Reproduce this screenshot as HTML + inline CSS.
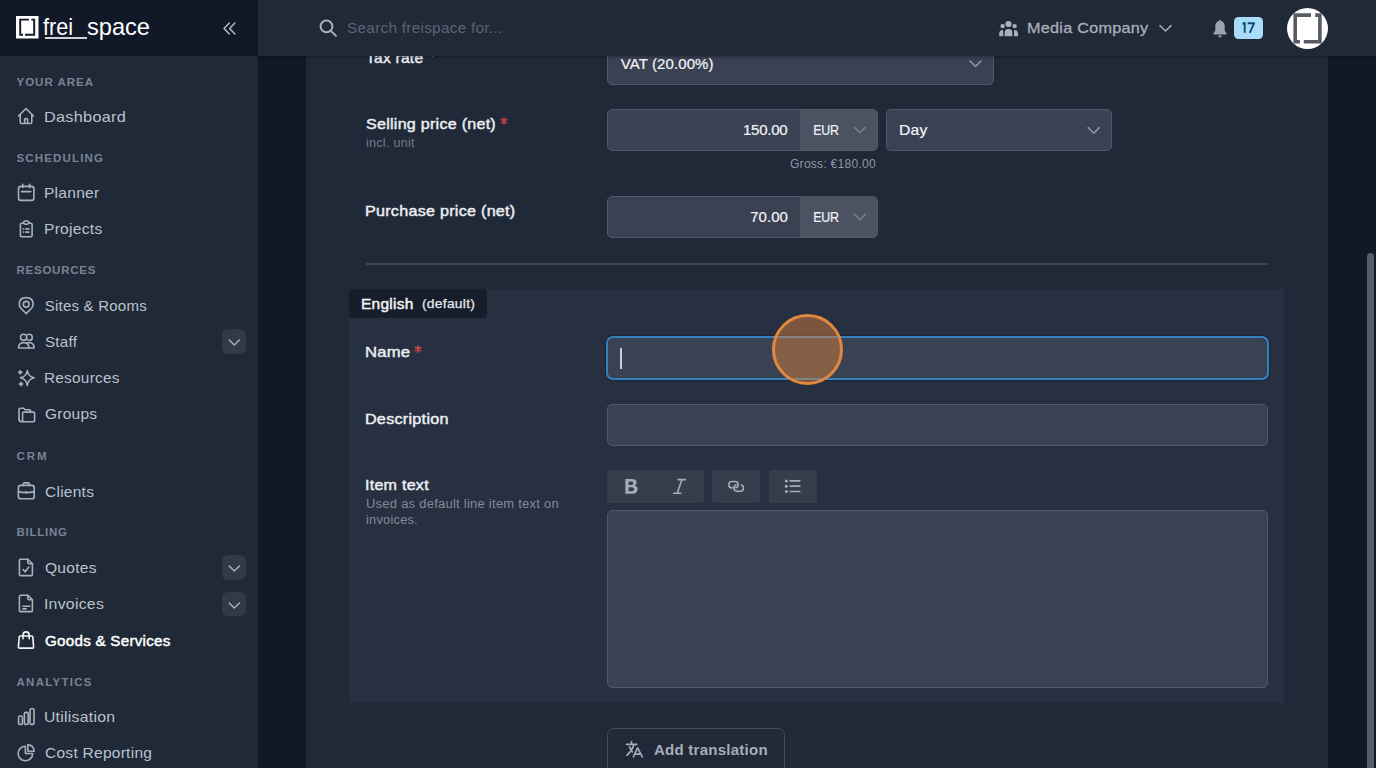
<!DOCTYPE html>
<html><head><meta charset="utf-8">
<style>
*{box-sizing:border-box;margin:0;padding:0}
html,body{width:1376px;height:768px;overflow:hidden;background:#1f2937;font-family:"Liberation Sans",sans-serif;position:relative}
.b{position:absolute}
.t{position:absolute;white-space:nowrap;line-height:1;z-index:5}
svg{position:absolute;overflow:visible;z-index:4}
.inp{position:absolute;background:#3a4152;border:1px solid #515969;border-radius:5px}
.chev{position:absolute;left:221.5px;width:24.5px;height:24.5px;background:#323949;border-radius:6px}
.tb{position:absolute;top:470px;height:33px;background:#363d4d;border-radius:3px}

</style></head>
<body>
<!-- backgrounds -->
<div class="b" style="left:0;top:0;width:258px;height:768px;background:#1f2937"></div>
<div class="b" style="left:0;top:0;width:258px;height:56px;background:#111827;z-index:20"></div>
<div class="b" style="left:258px;top:0;width:1118px;height:56px;background:#1f2937;z-index:20;box-shadow:0 1px 3px rgba(0,0,0,0.3)"></div>
<div class="b" style="left:258px;top:56px;width:48px;height:712px;background:#111827"></div>
<div class="b" style="left:1328px;top:56px;width:48px;height:712px;background:#111827"></div>
<div class="b" style="left:1367px;top:253px;width:7px;height:530px;background:#565d6a;border-radius:4px"></div>

<!-- content: VAT select (top clipped by header) -->
<div class="inp" style="left:607px;top:42px;width:387px;height:43px"></div>
<!-- selling price group -->
<div class="inp" style="left:607px;top:109px;width:271px;height:42px;overflow:hidden"><div class="b" style="left:192px;top:0;width:78px;height:42px;background:#4b5363"></div></div>
<div class="inp" style="left:886px;top:109px;width:226px;height:42px"></div>
<!-- purchase price group -->
<div class="inp" style="left:607px;top:196px;width:271px;height:42px;overflow:hidden"><div class="b" style="left:192px;top:0;width:78px;height:42px;background:#4b5363"></div></div>
<!-- divider -->
<div class="b" style="left:366px;top:263px;width:902px;height:1.5px;background:#3d4555"></div>
<!-- translation panel -->
<div class="b" style="left:349px;top:289px;width:935px;height:414px;background:#263040"></div>
<div class="b" style="left:349px;top:289px;width:138px;height:29px;background:#161d2b;border-radius:3px 3px 3px 3px"></div>
<!-- name input focused -->
<div class="b" style="left:606px;top:336px;width:663px;height:44px;background:#3a4152;border:2px solid #3581bd;border-radius:7px;box-shadow:0 0 0 1px rgba(15,30,55,0.55)"></div>
<div class="b" style="left:620px;top:348px;width:2px;height:20.5px;background:#c9cdd4"></div>
<!-- description -->
<div class="inp" style="left:607px;top:404px;width:661px;height:42px"></div>
<!-- toolbar -->
<div class="tb" style="left:607px;width:97px"></div>
<div class="tb" style="left:712px;width:48px"></div>
<div class="tb" style="left:769px;width:48px"></div>
<!-- textarea -->
<div class="inp" style="left:607px;top:510px;width:661px;height:178px"></div>
<!-- add translation -->
<div class="b" style="left:607px;top:728px;width:178px;height:50px;border:1px solid #444c5b;border-radius:7px"></div>

<!-- sidebar chevron buttons -->
<div class="chev" style="top:329px"></div>
<div class="chev" style="top:555px"></div>
<div class="chev" style="top:591.5px"></div>

<!-- badge -->
<div class="b" style="left:1234px;top:17px;width:29px;height:22px;background:#a9dcf8;border-radius:4.5px;z-index:21"></div>
<!-- avatar -->
<div class="b" style="left:1287px;top:7.5px;width:41px;height:41px;background:#ffffff;border-radius:50%;z-index:21"></div>

<!-- click indicator -->
<div class="b" style="left:771.5px;top:313.5px;width:71px;height:71px;border-radius:50%;border:3px solid #e0883e;background:rgba(232,134,56,0.44);z-index:10"></div>
<!-- sidebar logo -->
<svg style="left:16px;top:16px;z-index:21" width="22.5" height="22.5" viewBox="0 0 22.5 22.5"><rect x="0" y="0" width="22.5" height="22.5" fill="#fff"/><g stroke="#111827" stroke-width="1.9" fill="none"><path d="M4.2 2.8V19.6M18.2 2.8V19.6M3.3 3.6H12.9M15.4 3.6H19.1M3.3 18.7H7M9 18.7H19.1"/></g></svg>
<svg style="left:44px;top:14px;z-index:21" width="110" height="30" viewBox="0 0 110 30"><text x="-1" y="21.2" font-family="Liberation Sans" font-size="24" fill="#fff" textLength="30" lengthAdjust="spacingAndGlyphs">frei</text><text x="43" y="21.2" font-family="Liberation Sans" font-size="24" fill="#fff" textLength="63" lengthAdjust="spacingAndGlyphs">space</text><rect x="1" y="23.2" width="42" height="1.6" fill="#fff"/></svg>
<!-- collapse -->
<svg style="left:220px;top:18px;z-index:21" width="20" height="20" viewBox="0 0 20 20"><path d="M9.3 5L4 10.5L9.3 16M14.9 5L9.6 10.5L14.9 16" stroke="#b3bac6" stroke-width="1.5" fill="none" stroke-linecap="round" stroke-linejoin="round"/></svg>

<!-- top bar icons -->
<svg style="left:316px;top:16px;z-index:21" width="24" height="24" viewBox="0 0 24 24"><circle cx="10.5" cy="10.4" r="5.9" stroke="#a9b0bc" stroke-width="2" fill="none"/><path d="M14.9 14.9L19.9 19.8" stroke="#a9b0bc" stroke-width="2" stroke-linecap="round"/></svg>
<svg style="left:996.3px;top:16px;z-index:21" width="24" height="24" viewBox="0 0 24 24"><g fill="#a9b0bc"><circle cx="12.5" cy="8" r="3.1"/><circle cx="6.6" cy="10.1" r="2.2"/><circle cx="18.6" cy="10.1" r="2.2"/><path d="M8.6 20.3V17Q8.6 13 12.5 13Q16.4 13 16.4 17V20.3Z"/><path d="M3.2 20.3V17.6Q3.2 14.4 6.8 14.1Q6.9 14.1 7 14.2Q7.2 15.5 7.2 17V20.3Z"/><path d="M22 20.3V17.6Q22 14.4 18.4 14.1Q18.3 14.1 18.2 14.2Q18 15.5 18 17V20.3Z"/></g></svg>
<svg style="left:1155px;top:18px;z-index:21" width="20" height="20" viewBox="0 0 20 20"><path d="M5 7.6L10.5 13L16 7.6" stroke="#a3aab6" stroke-width="1.5" fill="none" stroke-linecap="round" stroke-linejoin="round"/></svg>
<svg style="left:1208px;top:17px;z-index:21" width="24" height="24" viewBox="0 0 24 24"><path fill="#9ca3af" d="M12 4C9.2 4 7.3 6.1 7.3 9V13.6L5.3 16.8Q5 17.6 5.8 17.6H18.2Q19 17.6 18.7 16.8L16.7 13.6V9C16.7 6.1 14.8 4 12 4ZM10 18.6Q10.4 20.6 12 20.6Q13.6 20.6 14 18.6Z"/><circle cx="12" cy="4" r="1.1" fill="#9ca3af"/></svg>
<svg style="left:1287px;top:7.5px;z-index:22" width="41" height="41" viewBox="0 0 41 41"><g stroke="#575b65" stroke-width="3.6" fill="none"><path d="M8.2 5.3V35.5M32.9 5.3V35.5M6.4 7.1H24M28.2 7.1H34.7M6.4 33.7H12.9M16.8 33.7H34.7"/></g></svg>

<!-- sidebar icons -->
<g></g>
<svg style="left:14px;top:104px" width="24" height="24" viewBox="0 0 24 24"><path d="M4.5 12L12 4.5L19.5 12M6.2 10.5V18.3Q6.2 19.5 7.4 19.5H16.6Q17.8 19.5 17.8 18.3V10.5M10.6 19.5V15.6Q10.6 14.6 11.6 14.6H12.6Q13.6 14.6 13.6 15.6V19.5" stroke="#a9b0bd" stroke-width="1.6" fill="none" stroke-linecap="round" stroke-linejoin="round"/></svg>
<svg style="left:14px;top:180px" width="24" height="24" viewBox="0 0 24 24"><g stroke="#a9b0bd" stroke-width="1.6" fill="none" stroke-linecap="round" stroke-linejoin="round"><rect x="4.5" y="6.4" width="15.4" height="14" rx="2.4"/><path d="M8.8 4.2V7.6M15.6 4.2V7.6M7.6 11.6H16.8"/></g></svg>
<svg style="left:14px;top:216px" width="24" height="24" viewBox="0 0 24 24"><g stroke="#a9b0bd" stroke-width="1.6" fill="none" stroke-linecap="round" stroke-linejoin="round"><path d="M9.4 7.3H7.6Q6.4 7.3 6.4 8.5V19.6Q6.4 20.8 7.6 20.8H16.9Q18.1 20.8 18.1 19.6V8.5Q18.1 7.3 16.9 7.3H15"/><rect x="9.6" y="5" width="5.2" height="3.2" rx="1.6"/><path d="M11.8 12.9H14.9M11.8 16.1H14.9M9.4 12.9H9.5M9.4 16.1H9.5"/></g></svg>
<svg style="left:14px;top:292px" width="24" height="24" viewBox="0 0 24 24"><g stroke="#a9b0bd" stroke-width="1.6" fill="none" stroke-linecap="round" stroke-linejoin="round"><circle cx="12.2" cy="12.3" r="2.9"/><path d="M12.2 21.6L6.9 16.2Q5.3 14.5 5.3 12.1Q5.3 5.6 12.2 5.6Q19.1 5.6 19.1 12.1Q19.1 14.5 17.5 16.2Z"/></g></svg>
<svg style="left:14px;top:328px" width="24" height="24" viewBox="0 0 24 24"><g stroke="#a9b0bd" stroke-width="1.6" fill="none" stroke-linecap="round" stroke-linejoin="round"><circle cx="9.6" cy="9.3" r="3.1"/><path d="M13.1 6.9Q14.2 6.2 15.2 6.2Q18.3 6.2 18.3 9.3Q18.3 12.4 15.2 12.4Q14.2 12.4 13.1 11.7"/><path d="M4.6 20V19.4Q4.6 14.7 9.7 14.7Q14.8 14.7 14.8 19.4V20Z"/><path d="M12.5 14.9Q13.8 14.7 15.3 14.7Q20 14.7 20 19.4V20H14.8"/></g></svg>
<svg style="left:14px;top:366px" width="24" height="24" viewBox="0 0 24 24"><g stroke="#a9b0bd" stroke-width="1.5" fill="none" stroke-linejoin="round"><path d="M13.3 4.5Q14.2 10.7 20.3 11.7Q14.2 12.7 13.3 19.6Q12.4 12.7 6.3 11.7Q12.4 10.7 13.3 4.5Z"/></g><g fill="#a9b0bd" stroke="#a9b0bd" stroke-width="0.8" stroke-linejoin="round"><path d="M6.2 4L7 5.5L8.5 6.3L7 7.1L6.2 8.6L5.4 7.1L3.9 6.3L5.4 5.5Z"/><path d="M7 15.7L7.8 17.2L9.3 18L7.8 18.8L7 20.3L6.2 18.8L4.7 18L6.2 17.2Z"/></g></svg>
<svg style="left:14px;top:402px" width="24" height="24" viewBox="0 0 24 24"><g stroke="#a9b0bd" stroke-width="1.6" fill="none" stroke-linecap="round" stroke-linejoin="round"><path d="M5 17.6V7.4Q5 6.2 6.2 6.2H9.6L11.2 7.8H15.4Q16.6 7.8 16.6 9V9.9"/><path d="M8.6 19.8V11.4Q8.6 10.1 9.8 10.1H19.4Q20.6 10.1 20.6 11.4V18.6Q20.6 19.8 19.4 19.8H8.6Q5 19.8 5 17.2"/></g></svg>
<svg style="left:14px;top:478px" width="24" height="24" viewBox="0 0 24 24"><g stroke="#a9b0bd" stroke-width="1.6" fill="none" stroke-linecap="round" stroke-linejoin="round"><rect x="4.4" y="7.4" width="15.8" height="13.4" rx="2.4"/><path d="M9.2 7.4V6.3Q9.2 4.9 10.6 4.9H14Q15.4 4.9 15.4 6.3V7.4M4.4 13.6Q12.3 15.6 20.2 13.6M12 13.5V13.6"/></g></svg>
<svg style="left:14px;top:555px" width="24" height="24" viewBox="0 0 24 24"><g stroke="#a9b0bd" stroke-width="1.6" fill="none" stroke-linecap="round" stroke-linejoin="round"><path d="M13.8 4.2H6.6Q5.4 4.2 5.4 5.4V19.4Q5.4 20.6 6.6 20.6H17.2Q18.4 20.6 18.4 19.4V8.8Z"/><path d="M13.8 4.2V7.6Q13.8 8.8 15 8.8H18.4M9.2 14.6L11.2 16.8L14.7 12.2"/></g></svg>
<svg style="left:14px;top:591px" width="24" height="24" viewBox="0 0 24 24"><g stroke="#a9b0bd" stroke-width="1.6" fill="none" stroke-linecap="round" stroke-linejoin="round"><path d="M13.8 4.2H6.6Q5.4 4.2 5.4 5.4V19.4Q5.4 20.6 6.6 20.6H17.2Q18.4 20.6 18.4 19.4V8.8Z"/><path d="M13.8 4.2V7.6Q13.8 8.8 15 8.8H18.4M9 15.2H15.8M9 17.9H12.2"/></g></svg>
<svg style="left:14px;top:628px" width="24" height="24" viewBox="0 0 24 24"><g stroke="#f3f4f6" stroke-width="1.6" fill="none" stroke-linecap="round" stroke-linejoin="round"><path d="M6.3 8H17.8Q18.7 8 18.8 8.9L19.6 18.9Q19.7 20.1 18.5 20.1H5.5Q4.3 20.1 4.4 18.9L5.2 8.9Q5.3 8 6.3 8Z"/><path d="M9 10.8V7.2Q9 3.9 12.1 3.9Q15.2 3.9 15.2 7.2V10.8"/></g></svg>
<svg style="left:14px;top:704px" width="24" height="24" viewBox="0 0 24 24"><g stroke="#a9b0bd" stroke-width="1.6" fill="none" stroke-linecap="round" stroke-linejoin="round"><rect x="4.6" y="12" width="3.8" height="8.4" rx="1.2"/><rect x="10.4" y="8.4" width="3.8" height="12" rx="1.2"/><rect x="16" y="4.8" width="4" height="15.6" rx="1.2"/></g></svg>
<svg style="left:14px;top:740px" width="24" height="24" viewBox="0 0 24 24"><g stroke="#a9b0bd" stroke-width="1.6" fill="none" stroke-linecap="round" stroke-linejoin="round"><path d="M11.4 6.2A7.3 7.3 0 1 0 18.7 13.5H11.4Z"/><path d="M13.9 4.6V11.2H20.2A6.6 6.6 0 0 0 13.9 4.6Z"/></g></svg>

<!-- sidebar chevrons -->
<svg style="left:221.5px;top:329px" width="25" height="25" viewBox="0 0 25 25"><path d="M7.2 11L12.3 16L17.4 11" stroke="#a9b0bd" stroke-width="1.5" fill="none" stroke-linecap="round" stroke-linejoin="round"/></svg>
<svg style="left:221.5px;top:555px" width="25" height="25" viewBox="0 0 25 25"><path d="M7.2 11L12.3 16L17.4 11" stroke="#a9b0bd" stroke-width="1.5" fill="none" stroke-linecap="round" stroke-linejoin="round"/></svg>
<svg style="left:221.5px;top:591.5px" width="25" height="25" viewBox="0 0 25 25"><path d="M7.2 11L12.3 16L17.4 11" stroke="#a9b0bd" stroke-width="1.5" fill="none" stroke-linecap="round" stroke-linejoin="round"/></svg>

<!-- select chevrons -->
<svg style="left:965px;top:54px" width="20" height="20" viewBox="0 0 20 20"><path d="M5 7L10.5 12.4L16 7" stroke="#8e95a2" stroke-width="1.6" fill="none" stroke-linecap="round" stroke-linejoin="round"/></svg>
<svg style="left:850px;top:121px" width="20" height="20" viewBox="0 0 20 20"><path d="M4.4 6.4L9.8 11.8L15.2 6.4" stroke="#777e8b" stroke-width="1.6" fill="none" stroke-linecap="round" stroke-linejoin="round"/></svg>
<svg style="left:1084px;top:121px" width="20" height="20" viewBox="0 0 20 20"><path d="M4.3 6.6L9.8 12.3L15.3 6.6" stroke="#8e95a2" stroke-width="1.6" fill="none" stroke-linecap="round" stroke-linejoin="round"/></svg>
<svg style="left:850px;top:208px" width="20" height="20" viewBox="0 0 20 20"><path d="M4.4 6.4L9.8 11.8L15.2 6.4" stroke="#777e8b" stroke-width="1.6" fill="none" stroke-linecap="round" stroke-linejoin="round"/></svg>

<!-- red asterisks -->
<svg style="left:498px;top:115px" width="12" height="12" viewBox="0 0 12 12"><g stroke="#d9434a" stroke-width="1.5" stroke-linecap="round"><path d="M6 3V9.2M3.3 4.5L8.7 7.7M8.7 4.5L3.3 7.7"/></g></svg>
<svg style="left:411.5px;top:342.5px" width="12" height="12" viewBox="0 0 12 12"><g stroke="#d9434a" stroke-width="1.5" stroke-linecap="round"><path d="M6 3V9.2M3.3 4.5L8.7 7.7M8.7 4.5L3.3 7.7"/></g></svg>
<svg style="left:427px;top:46.5px" width="12" height="12" viewBox="0 0 12 12"><g stroke="#d9434a" stroke-width="1.5" stroke-linecap="round"><path d="M6 3V9.2M3.3 4.5L8.7 7.7M8.7 4.5L3.3 7.7"/></g></svg>

<!-- toolbar icons -->
<svg style="left:619px;top:474px" width="24" height="24" viewBox="0 0 24 24"><path fill="#a6adb9" d="M6.4 5.1H12.6Q17.6 5.1 17.6 8.6Q17.6 10.8 15.6 11.5Q18.6 12.2 18.6 15Q18.6 19.7 13.2 19.7H6.4ZM9.6 7.6V11H12.2Q14.4 11 14.4 9.3Q14.4 7.6 12.2 7.6ZM9.6 13.3V17.2H12.6Q15.3 17.2 15.3 15.2Q15.3 13.3 12.6 13.3Z"/></svg>
<svg style="left:667px;top:474px" width="24" height="24" viewBox="0 0 24 24"><path d="M11.2 5.6H18.4M6.6 19.2H13.8M15 5.6L10.2 19.2" stroke="#a6adb9" stroke-width="1.6" fill="none" stroke-linecap="round"/></svg>
<svg style="left:722px;top:474px" width="24" height="24" viewBox="0 0 24 24"><g stroke="#a6adb9" stroke-width="1.6" fill="none" stroke-linecap="round"><path d="M10 13.9A3.2 3.2 0 0 1 10.1 7.5H13A3.2 3.2 0 0 1 13.83 13.79"/><path d="M14 11A3.2 3.2 0 0 0 15.1 17.2H18.3A3.2 3.2 0 0 0 19.4 11"/></g></svg>
<svg style="left:780px;top:474px" width="24" height="24" viewBox="0 0 24 24"><g fill="#a6adb9"><circle cx="6.3" cy="6.9" r="1.5"/><circle cx="6.3" cy="12.2" r="1.5"/><circle cx="6.3" cy="17.5" r="1.5"/></g><path d="M9.6 6.9H20.4M9.6 12.2H20.4M9.6 17.5H20.4" stroke="#a6adb9" stroke-width="1.7"/></svg>

<!-- translate icon -->
<svg style="left:622px;top:737px" width="24" height="24" viewBox="0 0 24 24"><g stroke="#a6adb9" stroke-width="1.6" fill="none" stroke-linecap="round" stroke-linejoin="round"><path d="M4.4 7.4H14.8M9.5 4.6V7.4M11.8 8.4Q9.6 14.4 4.8 18.3M7.4 9.9Q8.6 13 10.5 14.8M11.3 19.9L15.6 10.9L20.3 19.9M12.6 17.1H19"/></g></svg>

<svg style="left:1234px;top:17px;z-index:22" width="29" height="22" viewBox="0 0 29 22"><g stroke="#0e4b6f" stroke-width="1.85" fill="none" stroke-linejoin="round"><path d="M8.6 7.2L10.7 5.8V15.8"/><path d="M13.7 6.2H20.1L15.8 15.8"/></g></svg>

<div class='t' style='left:16.5px;top:76.5px;font-size:11.5px;font-weight:bold;color:#7b8393;letter-spacing:1.00px;z-index:5;'>YOUR AREA</div>
<div class='t' style='left:16.5px;top:152.9px;font-size:11.5px;font-weight:bold;color:#7b8393;letter-spacing:1.15px;z-index:5;'>SCHEDULING</div>
<div class='t' style='left:16.5px;top:265.4px;font-size:11.5px;font-weight:bold;color:#7b8393;letter-spacing:0.75px;z-index:5;'>RESOURCES</div>
<div class='t' style='left:16.5px;top:450.9px;font-size:11.5px;font-weight:bold;color:#7b8393;letter-spacing:2.00px;z-index:5;'>CRM</div>
<div class='t' style='left:16.5px;top:527.3px;font-size:11.5px;font-weight:bold;color:#7b8393;letter-spacing:0.73px;z-index:5;'>BILLING</div>
<div class='t' style='left:16.5px;top:676.5px;font-size:11.5px;font-weight:bold;color:#7b8393;letter-spacing:1.28px;z-index:5;'>ANALYTICS</div>
<div class='t' style='left:43.7px;top:108.5px;font-size:15px;font-weight:normal;color:#bcc2cc;letter-spacing:0.25px;z-index:5;transform:scaleX(1.087);transform-origin:1.0px 0;'>Dashboard</div>
<div class='t' style='left:43.7px;top:185.3px;font-size:15px;font-weight:normal;color:#bcc2cc;letter-spacing:0.25px;z-index:5;transform:scaleX(1.038);transform-origin:1.0px 0;'>Planner</div>
<div class='t' style='left:43.7px;top:221.3px;font-size:15px;font-weight:normal;color:#bcc2cc;letter-spacing:0.25px;z-index:5;transform:scaleX(1.042);transform-origin:1.0px 0;'>Projects</div>
<div class='t' style='left:44.7px;top:297.8px;font-size:15px;font-weight:normal;color:#bcc2cc;letter-spacing:0.23px;z-index:5;'>Sites &amp; Rooms</div>
<div class='t' style='left:44.7px;top:334.0px;font-size:15px;font-weight:normal;color:#bcc2cc;letter-spacing:0.25px;z-index:5;transform:scaleX(1.009);transform-origin:0.0px 0;'>Staff</div>
<div class='t' style='left:43.7px;top:370.3px;font-size:15px;font-weight:normal;color:#bcc2cc;letter-spacing:0.25px;z-index:5;transform:scaleX(1.024);transform-origin:1.0px 0;'>Resources</div>
<div class='t' style='left:44.7px;top:406.3px;font-size:15px;font-weight:normal;color:#bcc2cc;letter-spacing:0.25px;z-index:5;transform:scaleX(1.033);transform-origin:0.0px 0;'>Groups</div>
<div class='t' style='left:44.7px;top:483.5px;font-size:15px;font-weight:normal;color:#bcc2cc;letter-spacing:0.25px;z-index:5;transform:scaleX(1.033);transform-origin:0.0px 0;'>Clients</div>
<div class='t' style='left:44.7px;top:559.7px;font-size:15px;font-weight:normal;color:#bcc2cc;letter-spacing:0.25px;z-index:5;transform:scaleX(1.038);transform-origin:0.0px 0;'>Quotes</div>
<div class='t' style='left:43.7px;top:596.3px;font-size:15px;font-weight:normal;color:#bcc2cc;letter-spacing:0.25px;z-index:5;transform:scaleX(1.055);transform-origin:1.0px 0;'>Invoices</div>
<div class='t' style='left:43.7px;top:708.9px;font-size:15px;font-weight:normal;color:#bcc2cc;letter-spacing:0.25px;z-index:5;transform:scaleX(1.052);transform-origin:1.0px 0;'>Utilisation</div>
<div class='t' style='left:44.7px;top:745.1px;font-size:15px;font-weight:normal;color:#bcc2cc;letter-spacing:0.25px;z-index:5;transform:scaleX(1.035);transform-origin:0.0px 0;'>Cost Reporting</div>
<div class='t' style='left:44.7px;top:632.5px;font-size:15px;font-weight:normal;-webkit-text-stroke:0.45px #ffffff;color:#ffffff;letter-spacing:0.25px;z-index:5;transform:scaleX(1.012);transform-origin:0.0px 0;'>Goods &amp; Services</div>
<div class='t' style='left:346.7px;top:20.3px;font-size:15px;font-weight:normal;color:#5c6473;letter-spacing:0.25px;z-index:22;transform:scaleX(1.025);transform-origin:0.0px 0;'>Search freispace for...</div>
<div class='t' style='left:1027.0px;top:19.6px;font-size:15px;font-weight:normal;-webkit-text-stroke:0.3px #a9afbb;color:#a9afbb;letter-spacing:0.25px;z-index:22;transform:scaleX(1.081);transform-origin:1.0px 0;'>Media Company</div>
<div class='t' style='left:366.0px;top:50.0px;font-size:15px;font-weight:normal;-webkit-text-stroke:0.45px #eceef2;color:#eceef2;letter-spacing:0.25px;z-index:5;transform:scaleX(1.035);transform-origin:0.0px 0;'>Tax rate</div>
<div class='t' style='left:365.6px;top:115.6px;font-size:15px;font-weight:normal;-webkit-text-stroke:0.45px #eceef2;color:#eceef2;letter-spacing:0.25px;z-index:5;transform:scaleX(1.070);transform-origin:0.0px 0;'>Selling price (net)</div>
<div class='t' style='left:365.6px;top:136.8px;font-size:12px;font-weight:normal;color:#737a88;letter-spacing:0.25px;z-index:5;transform:scaleX(1.048);transform-origin:0.0px 0;'>incl. unit</div>
<div class='t' style='left:364.6px;top:203.1px;font-size:15px;font-weight:normal;-webkit-text-stroke:0.45px #eceef2;color:#eceef2;letter-spacing:0.25px;z-index:5;transform:scaleX(1.075);transform-origin:1.0px 0;'>Purchase price (net)</div>
<div class='t' style='left:360.9px;top:295.7px;font-size:15px;font-weight:normal;-webkit-text-stroke:0.45px #f3f4f6;color:#f3f4f6;letter-spacing:0.25px;z-index:5;transform:scaleX(1.033);transform-origin:1.0px 0;'>English</div>
<div class='t' style='left:422.0px;top:297.4px;font-size:13px;font-weight:normal;-webkit-text-stroke:0.25px #e5e7eb;color:#e5e7eb;letter-spacing:0.25px;z-index:5;transform:scaleX(1.064);transform-origin:0.0px 0;'>(default)</div>
<div class='t' style='left:365.0px;top:344.1px;font-size:15px;font-weight:normal;-webkit-text-stroke:0.45px #eceef2;color:#eceef2;letter-spacing:0.25px;z-index:5;transform:scaleX(1.109);transform-origin:1.0px 0;'>Name</div>
<div class='t' style='left:365.0px;top:410.7px;font-size:15px;font-weight:normal;-webkit-text-stroke:0.45px #eceef2;color:#eceef2;letter-spacing:0.25px;z-index:5;transform:scaleX(1.078);transform-origin:1.0px 0;'>Description</div>
<div class='t' style='left:365.0px;top:477.0px;font-size:15px;font-weight:normal;-webkit-text-stroke:0.45px #eceef2;color:#eceef2;letter-spacing:0.25px;z-index:5;transform:scaleX(1.070);transform-origin:1.0px 0;'>Item text</div>
<div class='t' style='left:366.0px;top:497.8px;font-size:12px;font-weight:normal;color:#848b98;letter-spacing:0.25px;z-index:5;transform:scaleX(1.078);transform-origin:0.0px 0;'>Used as default line item text on</div>
<div class='t' style='left:366.0px;top:513.8px;font-size:12px;font-weight:normal;color:#848b98;letter-spacing:0.25px;z-index:5;transform:scaleX(1.061);transform-origin:0.0px 0;'>invoices.</div>
<div class='t' style='left:620.8px;top:56.1px;font-size:15px;font-weight:normal;-webkit-text-stroke:0.2px #f3f4f6;color:#f3f4f6;letter-spacing:0.09px;z-index:5;'>VAT (20.00%)</div>
<div class='t' style='left:743.0px;top:122.0px;font-size:15px;font-weight:normal;-webkit-text-stroke:0.2px #f3f4f6;color:#f3f4f6;letter-spacing:-0.25px;z-index:5;'>150.00</div>
<div class='t' style='left:812.7px;top:122.0px;font-size:15px;font-weight:normal;-webkit-text-stroke:0.2px #f3f4f6;color:#f3f4f6;letter-spacing:-0.30px;z-index:5;transform:scaleX(0.827);transform-origin:1.0px 0;'>EUR</div>
<div class='t' style='left:898.5px;top:122.0px;font-size:15px;font-weight:normal;-webkit-text-stroke:0.2px #f3f4f6;color:#f3f4f6;letter-spacing:0.25px;z-index:5;transform:scaleX(1.046);transform-origin:1.0px 0;'>Day</div>
<div class='t' style='left:789.9px;top:157.8px;font-size:12px;font-weight:normal;color:#8f96a3;letter-spacing:0.25px;z-index:5;transform:scaleX(1.004);transform-origin:0.0px 0;'>Gross: €180.00</div>
<div class='t' style='left:750.2px;top:208.8px;font-size:15px;font-weight:normal;-webkit-text-stroke:0.2px #f3f4f6;color:#f3f4f6;letter-spacing:0.03px;z-index:5;'>70.00</div>
<div class='t' style='left:812.7px;top:208.8px;font-size:15px;font-weight:normal;-webkit-text-stroke:0.2px #f3f4f6;color:#f3f4f6;letter-spacing:-0.30px;z-index:5;transform:scaleX(0.827);transform-origin:1.0px 0;'>EUR</div>
<div class='t' style='left:653.5px;top:742.0px;font-size:15px;font-weight:bold;color:#a7adb9;letter-spacing:0.25px;z-index:5;transform:scaleX(1.001);transform-origin:0.0px 0;'>Add translation</div>
</body></html>
